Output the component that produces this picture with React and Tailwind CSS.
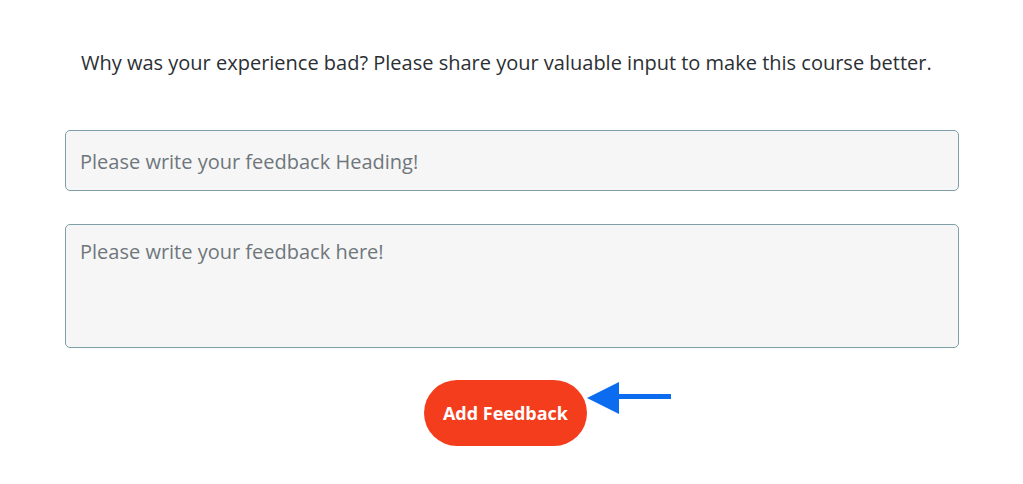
export default function App() {
  return (
    <div className="min-h-[484px] bg-white font-['Open_Sans',sans-serif]">
      <div className="pl-[65px] pr-[64px] pt-[49px]">
        <p className="pl-[16px] text-[20px] leading-[28px] text-[#2b2f33]">
          Why was your experience bad? Please share your valuable input to make this course better.
        </p>

        <form className="mt-[53px] flex flex-col">
          <input
            type="text"
            placeholder="Please write your feedback Heading!"
            className="h-[61px] w-full rounded-[5px] border border-[#7f9ea6] bg-[#f6f6f6] px-[14px] pt-[2px] text-[20px] text-[#333] outline-none placeholder:text-[#6f767c]"
          />
          <textarea
            placeholder="Please write your feedback here!"
            className="mt-[33px] h-[124px] w-full resize-none rounded-[5px] border border-[#7f9ea6] bg-[#f6f6f6] px-[14px] pt-[13px] text-[20px] leading-[28px] text-[#333] outline-none placeholder:text-[#6f767c]"
          />

          <div className="mt-[32px] flex justify-center pr-[13px]">
            <div className="relative">
              <button
                type="button"
                className="h-[66px] w-[163px] rounded-full bg-[#f43d1d] text-[18px] font-bold text-white"
              >
                Add Feedback
              </button>
              <svg
                className="absolute left-full top-0"
                width="86"
                height="36"
                viewBox="0 0 86 36"
              >
                <polygon points="0,18 32,2 32,34" fill="#0b6cf0" />
                <rect x="30" y="14" width="54" height="5" fill="#0b6cf0" />
              </svg>
            </div>
          </div>
        </form>
      </div>
    </div>
  );
}
